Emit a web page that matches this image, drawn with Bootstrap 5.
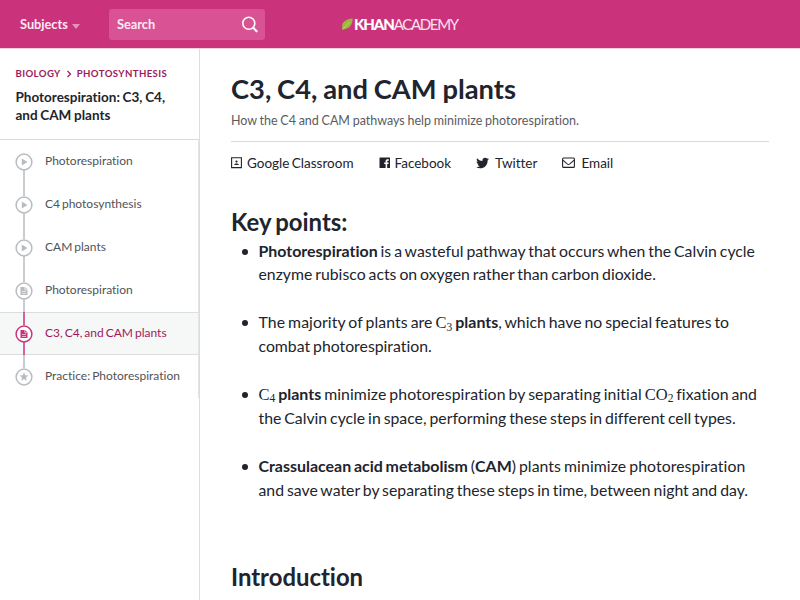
<!DOCTYPE html>
<html lang="en">
<head>
<meta charset="utf-8">
<meta name="viewport" content="width=device-width, initial-scale=1">
<title>C3, C4, and CAM plants | Khan Academy</title>
<link href="https://cdn.jsdelivr.net/npm/bootstrap@5.3.0/dist/css/bootstrap.min.css" rel="stylesheet">
<style>
body{font-family:Lato,"Liberation Sans",sans-serif;color:#21242c;height:600px;overflow:hidden;font-variant-ligatures:none;background:#fff}
a{color:inherit;text-decoration:none}
.topbar{height:49px;background:#ca337c;border-bottom:1px solid #f3cfe0;color:#fff;display:grid;grid-template-columns:109px 156px 1fr;flex:none}
.subjects{padding:2px 0 0 20px;font-weight:700;font-size:12.75px;color:#fcebf3}
.caret{width:0;height:0;border:4px solid transparent;border-top:5px solid #e891b9;border-bottom:0;margin-left:4px;margin-top:2px}
.search-box{height:31px;background:#d95293;border-radius:3px;padding:0 7px 0 8px;font-weight:700;font-size:12.75px;color:#fcebf3}
.search-box span{padding-top:2px}
.brand{padding-left:76px;font-size:15px;line-height:1}
.brand-bold{font-weight:900;letter-spacing:-1.1px}
.brand-thin{font-weight:400;letter-spacing:-1.35px;color:#fbe3ee}
.side{width:200px;border-right:1px solid #dcdddd;flex:none}
.side-head{height:91px;border-bottom:1px solid #d9dadb;padding:17.500px 15px 0 15.5px}
.crumbs{font-weight:700;font-size:9.6px;line-height:14px;letter-spacing:.4px;color:#9e1a5d}
.side-title{font-weight:700;font-size:13.5px;line-height:18px;word-spacing:-.6px;margin:7.500px 0 0}
.lessons{border-right:1px solid #e3e4e5;height:258px;margin-top:-.5px}
.lesson{height:43px;padding-left:15px;font-size:12px;word-spacing:-1.1px;color:#515356;--dot:#b9bcbf}
.lesson .rail{width:18px;height:43px;margin-right:12px;flex:none}
.lesson.on{background:#f6f7f7;color:#9e1a5d;--dot:#ca337c;box-shadow:inset 0 1px #dcdddd,inset 0 -1px #dcdddd}
.article{padding:22.500px 31px 0 31px;min-width:0}
.article h1{font-size:27.3px;font-weight:700;line-height:34px;word-spacing:-.8px;margin:0}
.sub{font-size:12.5px;line-height:18px;word-spacing:-.5px;color:#5a5c61;margin:6.500px 0 0;padding-bottom:11px;border-bottom:1px solid #d9dadb}
.share{margin-top:10.500px;gap:25px;font-size:13.5px;line-height:20px;word-spacing:-1px}
.share svg{flex:none}
.share .wide-icon{margin-right:6px}
.article h2{font-size:23.9px;font-weight:700;line-height:30px;word-spacing:-1.500px;margin:0}
.article .key-title{margin-top:34.500px}
.article .intro-title{margin-top:60px}
.points{list-style:none;padding:0 0 0 27.5px;margin:1.500px 0 0;font-size:15.8px;line-height:23.9px;word-spacing:-1.1px}
.points li{margin-bottom:24px;position:relative;white-space:nowrap}
.points li::before{content:"";position:absolute;left:-16.500px;top:10px;width:6px;height:6px;border-radius:50%;background:#21242c}
.points b{font-size:15.95px;line-height:1}
.points .ln{display:block;height:23.9px}
.loose{letter-spacing:.08px}
.chem{font-family:"Liberation Serif",serif;font-size:16.5px;line-height:1;letter-spacing:0}
.chem sub{font-size:11.5px;bottom:-.2em}
</style>
</head>
<body class="d-flex flex-column">
<header class="topbar align-items-center">
  <a href="#" class="subjects d-flex align-items-center">Subjects<i class="caret"></i></a>
  <div class="search-box d-flex align-items-center justify-content-between"><span>Search</span>
    <svg width="17" height="17" viewBox="0 0 17 17" fill="none" stroke="#fff"><circle cx="7.8" cy="7.3" r="6" stroke-width="1.6"/><path d="M12.300 11.8l3.300 3.500" stroke-width="2.1" stroke-linecap="round"/></svg>
  </div>
  <a href="#" class="brand d-flex align-items-center">
    <svg width="13" height="12" viewBox="0 0 13 12"><path d="M1.500 11.500C-.5 5 4 1 11.500.500c.5 6-3 11-10 11z" fill="#9cb53c"/><path d="M1.500 11.500L8.500 4" stroke="#d3dc8e" stroke-width=".7"/></svg>
    <span class="brand-bold">KHAN</span><span class="brand-thin">ACADEMY</span>
  </a>
</header>
<div class="d-flex flex-grow-1">
  <aside class="side">
    <div class="side-head">
      <nav class="crumbs d-flex align-items-center"><a href="#">BIOLOGY</a><svg class="mx-1" width="8" height="8" viewBox="0 0 8 8" fill="none" stroke="#9e1a5d" stroke-width="1.200"><path d="M2.500 1l3 3-3 3"/></svg><a href="#">PHOTOSYNTHESIS</a></nav>
      <h2 class="side-title">Photorespiration: C3, C4,<br>and CAM plants</h2>
    </div>
    <nav class="lessons">
      <a href="#" class="lesson d-flex align-items-center"><svg class="rail" viewBox="0 0 18 43" fill="none" stroke="var(--dot)" stroke-width="1.500"><path d="M9 30v13"/><circle cx="9" cy="22" r="7.900"/><path d="M6.800 18.500v7l5.700-3.500z" fill="var(--dot)" stroke="none"/></svg><span>Photorespiration</span></a>
      <a href="#" class="lesson d-flex align-items-center"><svg class="rail" viewBox="0 0 18 43" fill="none" stroke="var(--dot)" stroke-width="1.500"><path d="M9 0v13M9 30v13"/><circle cx="9" cy="22" r="7.900"/><path d="M6.800 18.500v7l5.700-3.500z" fill="var(--dot)" stroke="none"/></svg><span>C4 photosynthesis</span></a>
      <a href="#" class="lesson d-flex align-items-center"><svg class="rail" viewBox="0 0 18 43" fill="none" stroke="var(--dot)" stroke-width="1.500"><path d="M9 0v13M9 30v13"/><circle cx="9" cy="22" r="7.900"/><path d="M6.800 18.500v7l5.700-3.500z" fill="var(--dot)" stroke="none"/></svg><span>CAM plants</span></a>
      <a href="#" class="lesson d-flex align-items-center"><svg class="rail" viewBox="0 0 18 43" fill="none" stroke="var(--dot)" stroke-width="1.500"><path d="M9 0v13M9 30v13"/><circle cx="9" cy="22" r="7.900"/><path d="M5.500 18h4.500l2.500 2.500v5.500h-7z" fill="var(--dot)" stroke="none"/><path d="M7 22.500h4M7 24.500h4M9.800 18v2.700h2.700" stroke="#fff" stroke-width=".6"/></svg><span>Photorespiration</span></a>
      <a href="#" class="lesson on d-flex align-items-center"><svg class="rail" viewBox="0 0 18 43" fill="none" stroke="var(--dot)" stroke-width="1.500"><path d="M9 0v13M9 30v13"/><circle cx="9" cy="22" r="7.900" fill="#fff"/><path d="M5.500 18h4.500l2.500 2.500v5.500h-7z" fill="var(--dot)" stroke="none"/><path d="M7 22.500h4M7 24.500h4M9.800 18v2.700h2.700" stroke="#fff" stroke-width=".6"/></svg><span>C3, C4, and CAM plants</span></a>
      <a href="#" class="lesson d-flex align-items-center"><svg class="rail" viewBox="0 0 18 43" fill="none" stroke="var(--dot)" stroke-width="1.500"><path d="M9 0v13"/><circle cx="9" cy="22" r="7.900"/><path d="M9 17.300l1.300 3 3.200.2-2.500 2.100.8 3.100L9 24l-2.800 1.700.8-3.100-2.500-2.100 3.200-.2z" fill="var(--dot)" stroke="none"/></svg><span>Practice: Photorespiration</span></a>
    </nav>
  </aside>
  <main class="article flex-grow-1">
    <h1>C3, C4, and CAM plants</h1>
    <p class="sub">How the C4 and CAM pathways help minimize photorespiration.</p>
    <div class="share d-flex">
      <a href="#" class="d-flex align-items-center"><svg class="me-1" width="12" height="12" viewBox="0 0 12 12"><path d="M.600.800h9.800v9.800H.600z" fill="none" stroke="#21242c" stroke-width="1.100"/><circle cx="5.500" cy="4.600" r="1.100" fill="#21242c"/><path d="M3.200 7.900c0-2 4.600-2 4.600 0z" fill="#21242c"/></svg>Google Classroom</a>
      <a href="#" class="d-flex align-items-center"><svg class="me-1" width="12" height="12" viewBox="0 0 12 12" fill="#21242c"><path d="M1 .500h9.500a.5.5 0 0 1 .5.500v9.500a.5.5 0 0 1-.5.500H8.200V7h1.300l.2-1.600H8.200V4.500c0-.5.200-.8.800-.8h.8V2.300c-2-.3-3.200.3-3.200 1.900v1.200H5.200V7h1.400v4H1a.5.5 0 0 1-.5-.5V1a.5.5 0 0 1 .5-.5z"/></svg>Facebook</a>
      <a href="#" class="d-flex align-items-center"><svg class="wide-icon" width="13" height="12" viewBox="0 0 24 22" fill="#21242c"><path d="M24 3.500c-.9.400-1.800.7-2.800.8 1-.6 1.800-1.600 2.200-2.700-1 .6-2 1-3.100 1.200A4.900 4.900 0 0 0 12 7.300C7.900 7.100 4.300 5.100 1.900 2.100.600 4.300 1.200 7.200 3.400 8.700c-.8 0-1.600-.2-2.200-.6 0 2.300 1.600 4.400 3.900 4.900-.7.200-1.500.2-2.200.1.600 2 2.400 3.400 4.600 3.400A9.900 9.900 0 0 1 .200 18.500c8.700 5.600 21.600.7 21.300-12.500 1-.7 1.800-1.600 2.500-2.500z"/></svg>Twitter</a>
      <a href="#" class="d-flex align-items-center"><svg class="wide-icon" width="13" height="12" viewBox="0 0 13 12" fill="none" stroke="#21242c" stroke-width="1.100"><rect x=".600" y="1" width="11.800" height="9.400" rx="1"/><path d="M.800 3.200l4.700 3.900q1 .7 2 0l4.700-3.900"/></svg>Email</a>
    </div>
    <h2 class="key-title">Key points:</h2>
    <ul class="points">
      <li><span class="ln"><b>Photorespiration</b> is a wasteful pathway that occurs when the Calvin cycle</span><span class="ln">enzyme rubisco acts on oxygen rather than carbon dioxide.</span></li>
      <li><span class="ln"><span class="loose">The majority of plants are </span><span class="chem">C<sub>3</sub></span> <b>plants</b>, which have no special features to</span><span class="ln">combat photorespiration.</span></li>
      <li><span class="ln"><span class="chem">C<sub>4</sub></span> <b>plants</b><span class="loose"> minimize photorespiration by separating initial </span><span class="chem">CO<sub>2</sub></span> fixation and</span><span class="ln">the Calvin cycle in space, performing these steps in different cell types.</span></li>
      <li><span class="ln"><b>Crassulacean acid metabolism</b> (<b>CAM</b>) <span class="loose">plants minimize photorespiration</span></span><span class="ln">and save water by separating these steps in time, between night and day.</span></li>
    </ul>
    <h2 class="intro-title">Introduction</h2>
  </main>
</div>
</body>
</html>
